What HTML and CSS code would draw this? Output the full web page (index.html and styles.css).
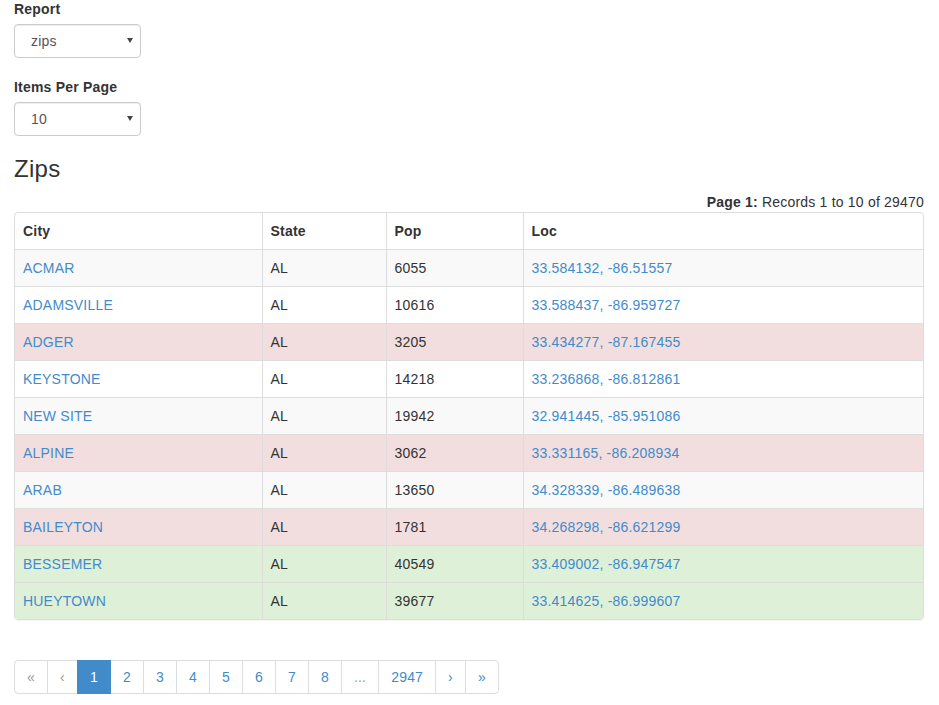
FILE: index.html
```html
<!DOCTYPE html>
<html>
<head>
<meta charset="utf-8">
<link rel="stylesheet" href="styles.css">
</head>
<body>
<div class="form-group">
  <label class="label">Report</label>
  <span class="select-wrap"><select class="form-control"><option>zips</option></select></span>
</div>
<div class="form-group">
  <label class="label">Items Per Page</label>
  <span class="select-wrap"><select class="form-control"><option>10</option></select></span>
</div>
<h3 class="title">Zips</h3>
<div class="page-info"><b>Page 1:</b> Records 1 to 10 of 29470</div>
<div class="table-wrap">
<table class="grid">
  <colgroup><col class="c-city"><col class="c-state"><col class="c-pop"><col></colgroup>
  <thead>
    <tr><th>City</th><th>State</th><th>Pop</th><th>Loc</th></tr>
  </thead>
  <tbody>
    <tr class="striped"><td><a href="#">ACMAR</a></td><td>AL</td><td>6055</td><td><a href="#">33.584132, -86.51557</a></td></tr>
    <tr><td><a href="#">ADAMSVILLE</a></td><td>AL</td><td>10616</td><td><a href="#">33.588437, -86.959727</a></td></tr>
    <tr class="danger"><td><a href="#">ADGER</a></td><td>AL</td><td>3205</td><td><a href="#">33.434277, -87.167455</a></td></tr>
    <tr><td><a href="#">KEYSTONE</a></td><td>AL</td><td>14218</td><td><a href="#">33.236868, -86.812861</a></td></tr>
    <tr class="striped"><td><a href="#">NEW SITE</a></td><td>AL</td><td>19942</td><td><a href="#">32.941445, -85.951086</a></td></tr>
    <tr class="danger"><td><a href="#">ALPINE</a></td><td>AL</td><td>3062</td><td><a href="#">33.331165, -86.208934</a></td></tr>
    <tr class="striped"><td><a href="#">ARAB</a></td><td>AL</td><td>13650</td><td><a href="#">34.328339, -86.489638</a></td></tr>
    <tr class="danger"><td><a href="#">BAILEYTON</a></td><td>AL</td><td>1781</td><td><a href="#">34.268298, -86.621299</a></td></tr>
    <tr class="success"><td><a href="#">BESSEMER</a></td><td>AL</td><td>40549</td><td><a href="#">33.409002, -86.947547</a></td></tr>
    <tr class="success"><td><a href="#">HUEYTOWN</a></td><td>AL</td><td>39677</td><td><a href="#">33.414625, -86.999607</a></td></tr>
  </tbody>
</table>
</div>
<ul class="pagination">
  <li class="disabled"><a href="#">«</a></li>
  <li class="disabled"><a href="#">‹</a></li>
  <li class="active"><a href="#">1</a></li>
  <li><a href="#">2</a></li>
  <li><a href="#">3</a></li>
  <li><a href="#">4</a></li>
  <li><a href="#">5</a></li>
  <li><a href="#">6</a></li>
  <li><a href="#">7</a></li>
  <li><a href="#">8</a></li>
  <li class="disabled"><a href="#">...</a></li>
  <li><a href="#">2947</a></li>
  <li><a href="#">›</a></li>
  <li><a href="#">»</a></li>
</ul>
</body>
</html>
```
FILE: styles.css
```css
html, body {
  margin: 0;
  padding: 0;
  background: #fff;
}
body {
  padding: 0 15px 0 14px;
  font-family: "Liberation Sans", Arial, sans-serif;
  font-size: 14px;
  line-height: 20px;
  letter-spacing: 0.2px;
  color: #333;
}
a {
  color: #428bca;
  text-decoration: none;
}
.form-group {
  margin-bottom: 19px;
}
.form-group:first-child {
  margin-top: -1px;
}
.label {
  display: block;
  font-weight: 700;
  margin-bottom: 5px;
}
.select-wrap {
  display: inline-block;
  position: relative;
  vertical-align: top;
}
.select-wrap::after {
  content: "";
  position: absolute;
  right: 8px;
  top: 14px;
  width: 0;
  height: 0;
  border-left: 3px solid transparent;
  border-right: 3px solid transparent;
  border-top: 5px solid #444;
  pointer-events: none;
}
.form-control {
  -webkit-appearance: none;
  appearance: none;
  display: block;
  width: 127px;
  height: 34px;
  padding: 6px 12px 6px 16px;
  font-family: "Liberation Sans", Arial, sans-serif;
  font-size: 14px;
  line-height: 20px;
  letter-spacing: 0.2px;
  color: #555;
  background: #fff;
  border: 1px solid #ccc;
  border-radius: 4px;
  box-shadow: inset 0 1px 1px rgba(0,0,0,.075);
  margin: 0;
}
.title {
  font-size: 24px;
  font-weight: 500;
  line-height: 1.1;
  letter-spacing: 0.3px;
  margin: 20px 0 10px;
}
.page-info {
  text-align: right;
}
.page-info b {
  font-weight: 700;
}
.table-wrap {
  border: 1px solid #ddd;
  border-radius: 4px;
  overflow: hidden;
  margin-bottom: 20px;
  box-shadow: 0 1px 1px rgba(0,0,0,.05);
}
.grid {
  width: 100%;
  border-collapse: collapse;
  table-layout: fixed;
}
.c-city { width: 247px; }
.c-state { width: 124px; }
.c-pop { width: 137px; }
.grid th, .grid td {
  padding: 8px;
  text-align: left;
  line-height: 20px;
  vertical-align: top;
  border-top: 1px solid #ddd;
  border-left: 1px solid #ddd;
}
.grid th {
  font-weight: 700;
}
.grid thead tr:first-child th {
  border-top: 0;
}
.grid th:first-child, .grid td:first-child {
  border-left: 0;
}
.grid tr.striped td { background: #f9f9f9; }
.grid tr.danger td { background: #f2dede; }
.grid tr.success td { background: #dff0d8; }
.pagination {
  display: flex;
  list-style: none;
  padding: 0;
  margin: 40px 0 20px;
}
.pagination li a {
  display: block;
  padding: 6px 12px;
  line-height: 20px;
  border: 1px solid #ddd;
  margin-left: -1px;
  background: #fff;
  color: #428bca;
}
.pagination li:first-child a {
  margin-left: 0;
  border-radius: 4px 0 0 4px;
}
.pagination li:last-child a {
  border-radius: 0 4px 4px 0;
}
.pagination li.disabled a {
  color: #999;
}
.pagination li.active a {
  background: #428bca;
  border-color: #428bca;
  color: #fff;
  position: relative;
  z-index: 1;
}
```
